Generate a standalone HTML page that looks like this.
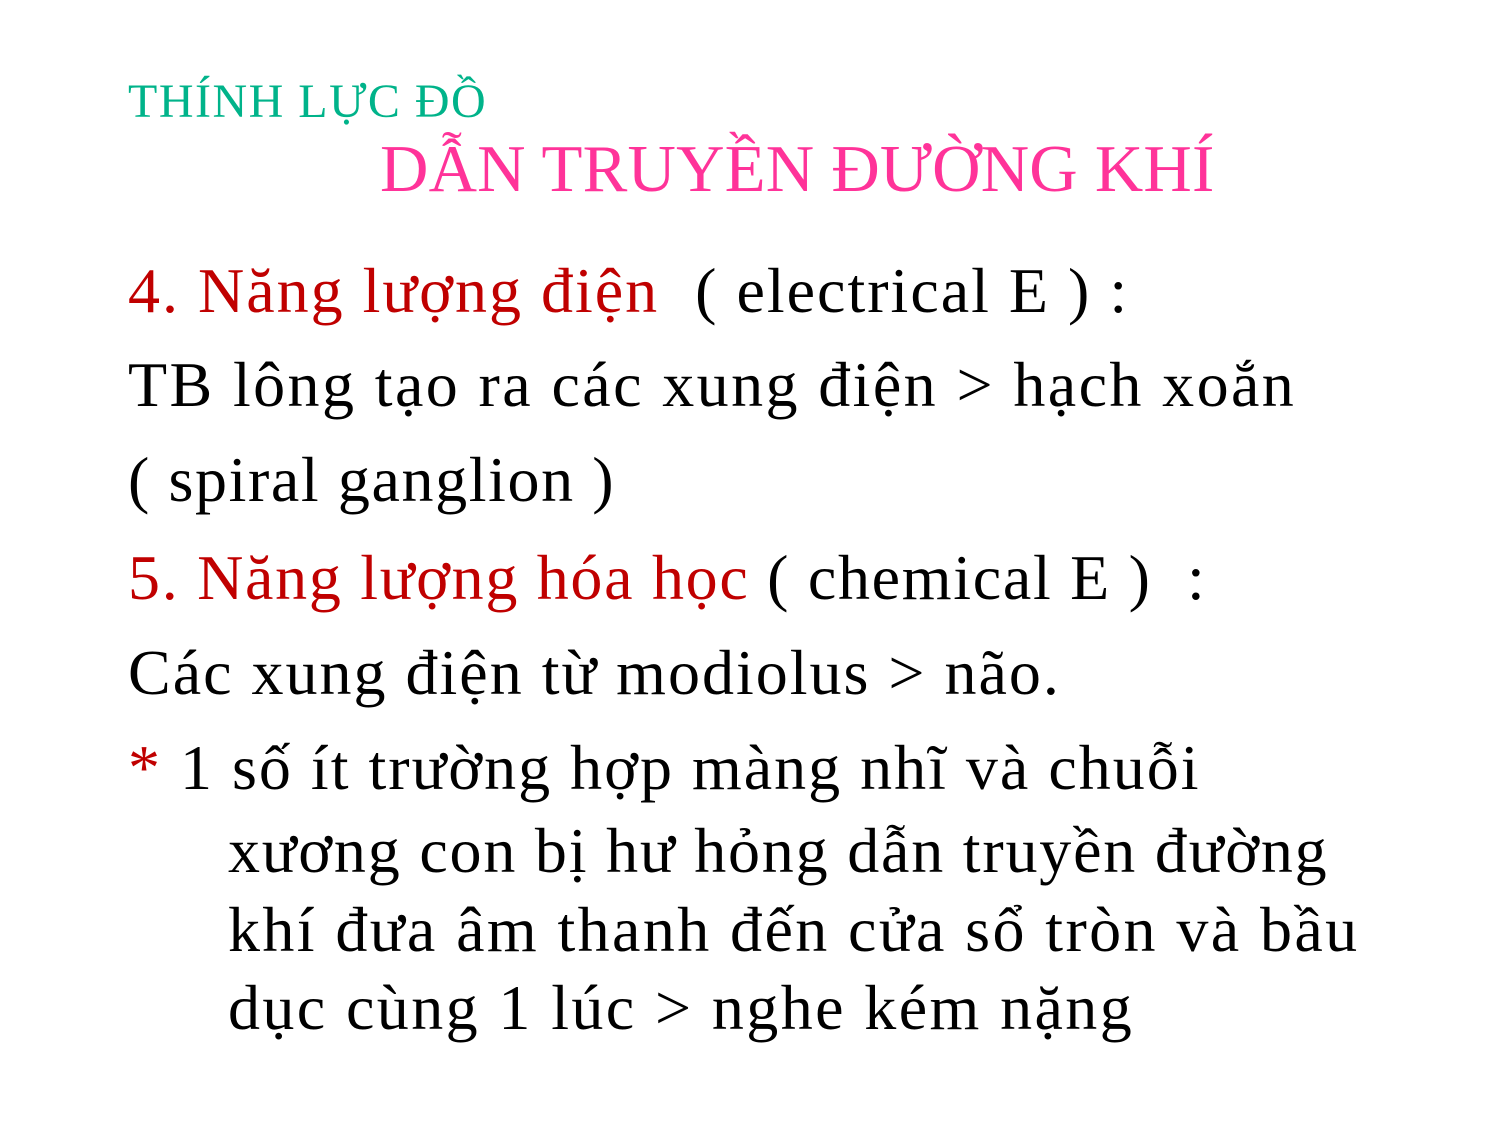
<!DOCTYPE html>
<html><head><meta charset="utf-8"><style>
html,body{margin:0;padding:0;background:#fff;}
body{width:1500px;height:1125px;position:relative;overflow:hidden;font-family:"Liberation Serif","DejaVu Serif",serif;color:#000;}
.l{position:absolute;white-space:nowrap;line-height:1;}
.r{color:#c00000;}
</style></head><body>
<div class="l" style="left:128px;top:78px;font-size:48px;color:#00b38a;letter-spacing:1.5px;">THÍNH LỰC ĐỒ</div>
<div class="l" style="left:380px;top:136px;font-size:67px;color:#ff3399;letter-spacing:0.2px;">DẪN TRUYỀN ĐƯỜNG KHÍ</div>
<div class="l" style="left:128px;top:259px;font-size:64px;letter-spacing:2px;"><span class="r">4. Năng lượng điện</span>&nbsp; ( electrical E ) :</div>
<div class="l" style="left:128px;top:353px;font-size:64px;letter-spacing:2.4px;">TB lông tạo ra các xung điện &gt; hạch xoắn</div>
<div class="l" style="left:128px;top:448px;font-size:64px;letter-spacing:1.6px;">( spiral ganglion )</div>
<div class="l" style="left:128px;top:546px;font-size:64px;letter-spacing:1.7px;"><span class="r">5. Năng lượng hóa học</span> ( chemical E )&nbsp; :</div>
<div class="l" style="left:128px;top:641px;font-size:64px;letter-spacing:2px;">Các xung điện từ modiolus &gt; não.</div>
<div class="l" style="left:128px;top:736px;font-size:64px;letter-spacing:2px;"><span class="r">*</span> 1 số ít trường hợp màng nhĩ và chuỗi</div>
<div class="l" style="left:228px;top:819px;font-size:64px;letter-spacing:1.8px;">xương con bị hư hỏng dẫn truyền đường</div>
<div class="l" style="left:228px;top:898px;font-size:64px;letter-spacing:2.4px;">khí đưa âm thanh đến cửa sổ tròn và bầu</div>
<div class="l" style="left:228px;top:976px;font-size:64px;letter-spacing:2.4px;">dục cùng 1 lúc &gt; nghe kém nặng</div>
</body></html>
